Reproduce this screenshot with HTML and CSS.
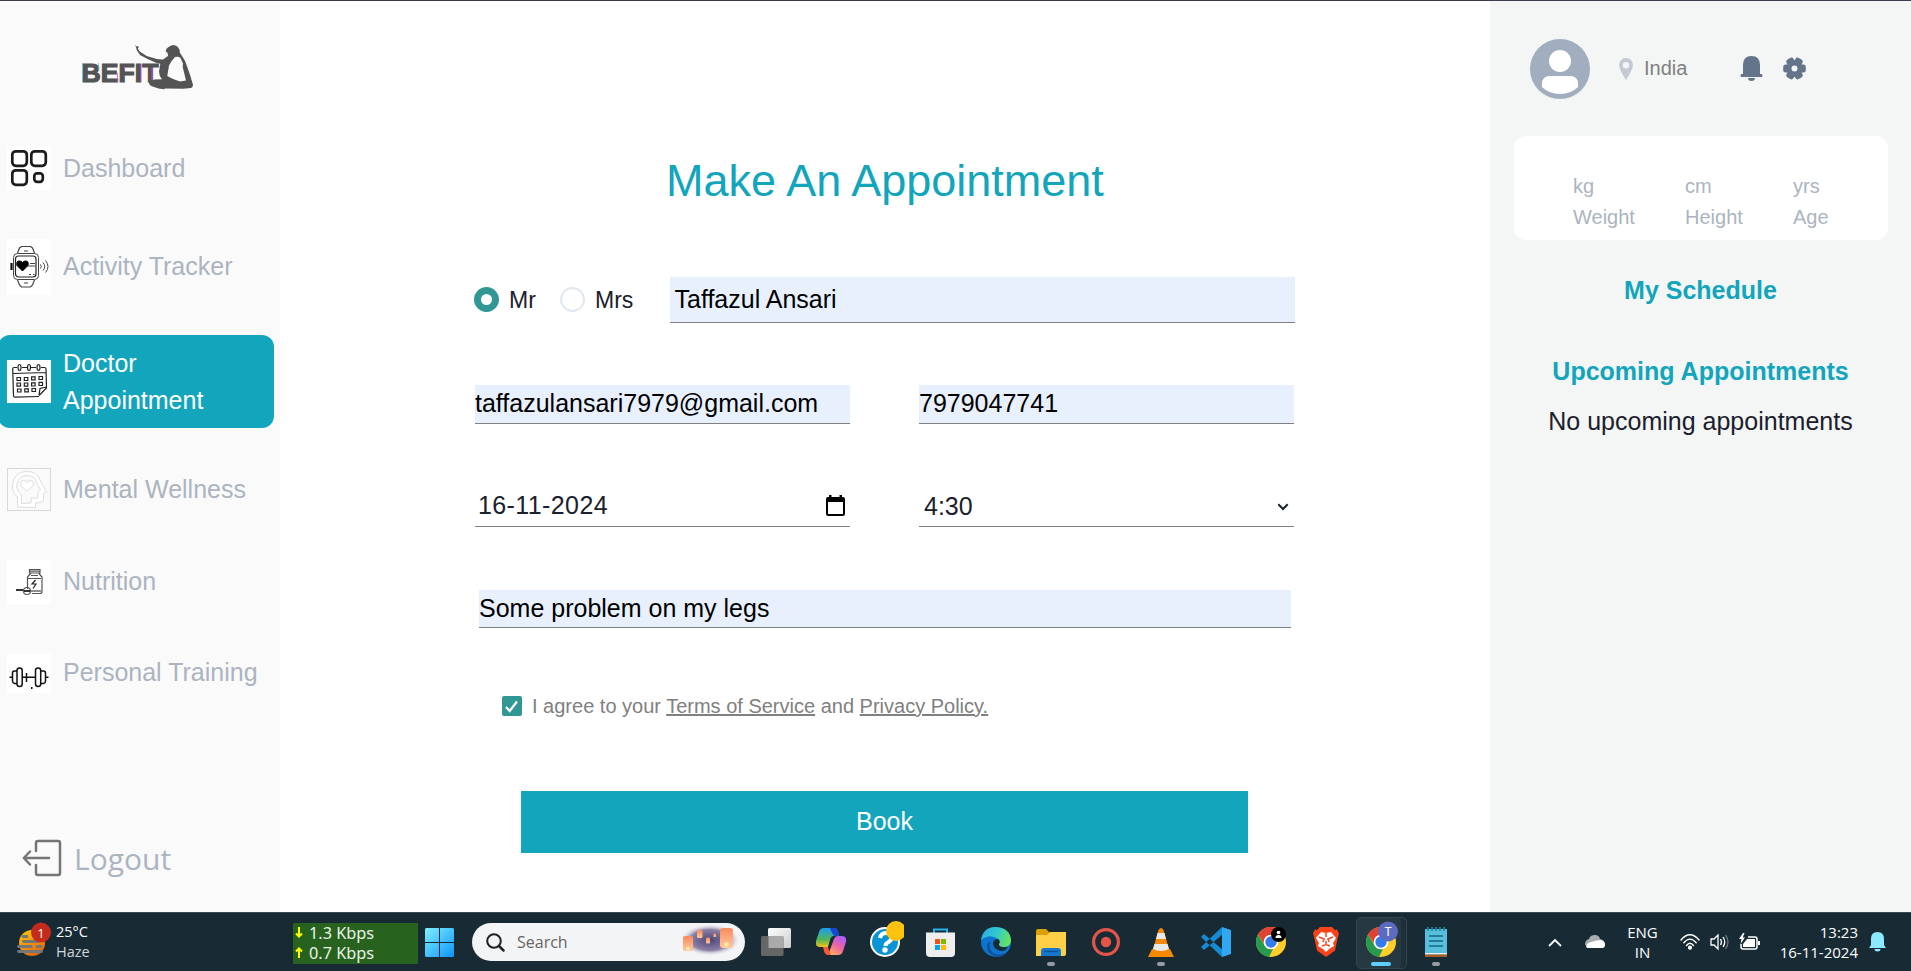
FILE: index.html
```html
<!DOCTYPE html>
<html lang="en">
<head>
<meta charset="utf-8">
<title>Befit - Doctor Appointment</title>
<link rel="stylesheet" href="styles.css">
</head>
<body>
<div class="app">
  <aside class="sidebar">
    <svg class="logo" width="114" height="50" viewBox="80 41 114 50">
      <g fill="#545454">
        <path d="M135 44l1.200 2.500L138 46l.7 1.500-1 1 2 3 7 4.500 10 3 6.300.6 2-1.600 3-2-.3-3-2-1.500q0-3 2.500-4.300 2.500-2 5-2.200 3.500.3 5 2.600 2 2.500 1.700 5.200l2 3 3.300 5.500 4.800 13.500 3 10q0 2.500-2 3.200l-8 .7-18-.3-1 .8q-6-.5-10-2.200-4.500-1-5.300-4.500l5.300-3 8-.3q-3-3.500-3-7.500l1.300-8-4.300-1-8.500-3.700-7.500-4-3.200-4.800zM175 57q-3.500 3.500-6 8.500l-1.700 10.500q3 2 6.500 3.200l6.200 2.300 6-1-3.300-13.500.3-3.500-2.500-5.500q-2-2-5.500-1z" fill-rule="evenodd"/>
        <text x="81.5" y="81.8" class="logo-text" textLength="77" lengthAdjust="spacingAndGlyphs">BEFIT</text>
      </g>
      <path d="M82.5 63v19M98.5 63v7" stroke="#48c9cf" stroke-width=".8"/>
      <path d="M117.500 73v9M124.500 67v3M141 64v18M152 68v12" stroke="#d44fe0" stroke-width=".8"/>
    </svg>
    <nav class="nav">
      <a class="item dashboard"><span class="pic pic-44"><svg width="44" height="44" viewBox="0 0 44 44" fill="none" stroke="#1c1c1c" stroke-width="2.700"><rect x="5.300" y="5.300" width="14.500" height="14.500" rx="3.500"/><rect x="24.300" y="5.300" width="14.500" height="14.500" rx="3.500"/><rect x="5.300" y="24.300" width="14.500" height="14.500" rx="3.500"/><rect x="27.300" y="27.300" width="8.500" height="8.500" rx="2.800"/></svg></span><span>Dashboard</span></a>
      <a class="item activity"><span class="pic pic-56"><svg width="44" height="56" viewBox="0 0 44 56" fill="none" stroke="#444"><path d="M10.500 14l2-5 2-1.500h9l2 1.500 2 5M10.500 41l2 5 2 2h9l2-2 2-5" stroke-width="1.200"/><rect x="6.500" y="14.500" width="25" height="26" rx="4"/><rect x="8.500" y="17" width="20.500" height="21" rx="3" stroke-width="1.200" stroke="#222"/><path d="M4.500 24v7" stroke="#111" stroke-width="2.200"/><path d="M15.500 32l-5.500-5.500q-1.200-4.500 2.500-4.500 2 0 3 1.500 1-1.500 3-1.500 3.700 0 2.500 4.500z" fill="#000" stroke="#000"/><path d="M20 27h8M23 24.500h5M17 12h4M17 44h4M22 35.500h2M26 35.500h1.500" stroke-width="1.200"/><path d="M33.500 25.500q1.500 2 0 4M36 23.500q3.500 4 0 8M38.500 21.500q5 6 0 12"/></svg></span><span>Activity Tracker</span></a>
      <a class="item active"><span class="pic pic-43"><svg width="44" height="43" viewBox="0 0 44 43" fill="none" stroke="#222" stroke-width="1.200"><path d="M32 36.500l-24 .7q-1.500 0-1.500-1.500L5.700 9q0-1.500 1.500-1.500h3M15 7.500h5M24 7.500h5M34 7.500h3.500q1.500 0 1.500 1.500l.5 19-7.500 7.500M6 13.500l33-1M32 35l1-6.500 6.500-1.500"/><g><ellipse cx="12.500" cy="7.500" rx="1.500" ry="3"/><ellipse cx="22" cy="7.500" rx="1.500" ry="3"/><ellipse cx="31.500" cy="7.500" rx="1.500" ry="3"/></g><path d="M10 17.500h3.500v3H10zM17.300 17.500h3.500v3h-3.500zM24.600 16.800h3.500v3h-3.500zM32 16.500h3.500v3H32zM10 23h3.500v3.200H10zM17.300 23h3.500v3.200h-3.500zM24.600 22.800h3.500V26h-3.500zM32 22.300h3.500v3.200H32zM10.500 29H14v3h-3.500zM17.800 28.800h3.500v3h-3.500zM25 28.500h3.500v3H25z"/></svg></span><span>Doctor Appointment</span></a>
      <a class="item mental"><span class="pic pic-frame"><svg width="44" height="43" viewBox="0 0 44 43" fill="#fff" stroke="#ddd"><rect x=".5" y=".5" width="43" height="42" fill="#fafafa" stroke="#d8d8d8"/><path d="M10.500 39V29Q4.500 24 5.500 16 8 3.500 19 3.500 31 3 33.500 13l6 11-3 1.500v6q0 3.500-8 3.500v4.500z"/><path d="M14.500 35.500V27Q9 22 10 16 12 7.500 19.500 7.500 29 7.500 29.500 15l4 6.500-2.500 2v6.500h-7v5z" fill="#fafafa"/><path d="M20 23.500l-6-6q-1.500-5 3-5 2 0 3 2 1-2 3-2 4.500 0 3 5z"/></svg></span><span>Mental Wellness</span></a>
      <a class="item nutrition"><span class="pic pic-44"><svg width="44" height="44" viewBox="0 0 44 44" fill="none" stroke="#555" stroke-width="1.200"><path d="M22.500 9.500h10.500v3.500H22.500zM22.500 11.200h10.500M24 13l-3.500 4v12M31.500 13l3.500 4V31.500q0 2-2 2h-8M21 18.500h13M24 15.500h7"/><path d="M28.500 20l-3.500 4h4l-3 4.500M24 31h10" stroke="#222"/><circle cx="20" cy="31" r="3.500"/><path d="M9 30h7M17 31h6" stroke="#333" stroke-width="1.800"/></svg></span><span>Nutrition</span></a>
      <a class="item training"><span class="pic pic-39"><svg width="44" height="39" viewBox="0 0 44 39" fill="none" stroke="#111" stroke-width="1.500"><rect x="10" y="14" width="5.200" height="18.500" rx="2.500"/><rect x="28.500" y="14" width="5.200" height="18.500" rx="2.500"/><path d="M10 17H7.500q-2 0-2 2v8q0 2 2 2.500H10M34 17h2.500q2 0 2 2v8q0 2-2 2.500H34M2.500 23.300h3M38.500 23.300h3M15.500 23.300h13M19.500 19v9"/><path d="M24 34h1.500" stroke-width="2"/></svg></span><span>Personal Training</span></a>
    </nav>
    <a class="logout"><svg width="40" height="38" viewBox="0 0 40 38" fill="none" stroke="#757575" stroke-width="2.500" stroke-linecap="round" stroke-linejoin="round"><path d="M14 12V4q0-2 2-2h20q2 0 2 2v30q0 2-2 2H16q-2 0-2-2v-8M27 19H2M8 12.500L1.800 19 8 25.500"/></svg><span>Logout</span></a>
  </aside>

  <main class="main">
    <h1 class="title">Make An Appointment</h1>
    <form class="form">
      <div class="row name-row">
        <span class="radio on"></span><span class="radio-label mr">Mr</span>
        <span class="radio"></span><span class="radio-label mrs">Mrs</span>
        <div class="field name filled">Taffazul Ansari</div>
      </div>
      <div class="row pair">
        <div class="field filled email">taffazulansari7979@gmail.com</div>
        <div class="field filled">7979047741</div>
      </div>
      <div class="row pair when">
        <div class="field date"><span>16-11-2024</span><svg width="19" height="21" viewBox="0 0 19 21"><path d="M3 0h2.500v2h8V0H16v2h1q2 0 2 2v15q0 2-2 2H2q-2 0-2-2V4q0-2 2-2h1zM2 7v12h15V7z" fill="#000" fill-rule="evenodd"/></svg></div>
        <div class="field time"><span>4:30</span><svg width="12" height="8" viewBox="0 0 12 8"><path d="M1.300 1.300L6 6l4.700-4.700" fill="none" stroke="#1a202c" stroke-width="2"/></svg></div>
      </div>
      <div class="field filled reason">Some problem on my legs</div>
      <div class="agree">
        <span class="check"><svg width="20" height="20" viewBox="0 0 20 20"><path d="M4 11l3.700 4L15 5.500" fill="none" stroke="#fff" stroke-width="2.200"/></svg></span>
        <span>I agree to your <u>Terms of Service</u> and <u>Privacy Policy.</u></span>
      </div>
      <div class="book">Book</div>
    </form>
  </main>

  <aside class="panel">
    <div class="profile">
      <svg width="60" height="60" viewBox="0 0 60 60"><circle cx="30" cy="30" r="30" fill="#a0aec0"/><circle cx="30" cy="22" r="11" fill="#fff"/><path d="M12 45q0-8 8-8h20q8 0 8 8v3q-7 7-18 7t-18-7z" fill="#fff"/></svg>
      <svg class="pin" width="14" height="22" viewBox="0 0 14 22"><path d="M7 0a7 7 0 0 1 7 7q0 4-7 15Q0 11 0 7a7 7 0 0 1 7-7zm0 4a3 3 0 1 0 0 6.400A3 3 0 0 0 7 4z" fill="#c3cad4"/></svg>
      <span class="place">India</span>
      <svg class="bell" width="23" height="25" viewBox="0 0 23 25"><path d="M3 18V9q0-9 8.500-9T20 9v9h1.500q1 0 1 1.500T21.500 21h-20q-1 0-1-1.500T1.500 18zM8 22h7q0 3-3.500 3T8 22z" fill="#64748b"/></svg>
      <svg class="gear" width="23" height="23" viewBox="-11.500 -11.500 23 23"><g fill="#64748b"><circle r="8"/><g id="tooth"><rect x="-11.300" y="-4" width="22.600" height="8" rx="2.500"/></g><use href="#tooth" transform="rotate(60)"/><use href="#tooth" transform="rotate(120)"/></g><circle r="3" fill="#f4f5f5"/></svg>
    </div>
    <div class="stats">
      <div class="weight">kg<br>Weight</div>
      <div class="height">cm<br>Height</div>
      <div class="age">yrs<br>Age</div>
    </div>
    <h2 class="schedule">My Schedule</h2>
    <h2 class="upcoming">Upcoming Appointments</h2>
    <p class="none">No upcoming appointments</p>
  </aside>
</div>

<footer class="taskbar">
  <div class="weather">
    <svg width="36" height="36" viewBox="16 918 36 36"><defs><linearGradient id="sun" x1="0" y1="0" x2=".5" y2="1"><stop offset="0" stop-color="#ffd000"/><stop offset="1" stop-color="#e86a10"/></linearGradient></defs><circle cx="32" cy="940" r="13" fill="url(#sun)"/><path d="M23 933.500h4M23.500 938.500h14M18.500 943.500h13M37 943.500h4M18.500 948.500h23" stroke="#747679" stroke-width="2.800" stroke-linecap="round"/><circle cx="41" cy="929.500" r="10" fill="#c42b1c"/><text x="41" y="934.500" class="badge-text" text-anchor="middle">1</text></svg>
    <div class="weather-text">25°C<br><span>Haze</span></div>
  </div>
  <div class="net"><div><svg width="8" height="12" viewBox="0 0 8 12"><path d="M4 0v9M1 6.500L4 9.500l3-3" fill="none" stroke="#ff0" stroke-width="2"/></svg>1.3 Kbps</div><div><svg width="8" height="12" viewBox="0 0 8 12"><path d="M4 11V2M1 4.500l3-3 3 3" fill="none" stroke="#ff0" stroke-width="2"/></svg>0.7 Kbps</div></div>
  <svg class="start" width="29" height="29" viewBox="0 0 29 29"><defs><linearGradient id="win" gradientUnits="userSpaceOnUse" x1="0" y1="0" x2="29" y2="29"><stop offset="0" stop-color="#7ef0ff"/><stop offset="1" stop-color="#0f94fb"/></linearGradient></defs><path d="M1 0h13v14H0V1zM15 0h13l1 1v13H15zM0 15h14v14H1l-1-1zM15 15h14v13l-1 1H15z" fill="url(#win)"/></svg>
  <div class="search">
    <svg width="19" height="19" viewBox="0 0 19 19" fill="none" stroke="#222"><circle cx="8" cy="8" r="6.800" stroke-width="2"/><path d="M13 13l4.500 4.500" stroke-width="2.500" stroke-linecap="round"/></svg>
    <span>Search</span>
    <svg class="lanterns" width="60" height="32" viewBox="0 0 60 32"><defs><radialGradient id="dusk"><stop offset="0" stop-color="#4f4677"/><stop offset=".65" stop-color="#8980a5"/><stop offset="1" stop-color="#f3f3f5" stop-opacity="0"/></radialGradient><linearGradient id="lamp" x1="0" y1="0" x2="0" y2="1"><stop offset="0" stop-color="#f78b5e"/><stop offset="1" stop-color="#ffc99b"/></linearGradient></defs><ellipse cx="30" cy="16" rx="30" ry="16" fill="url(#dusk)"/><g fill="url(#lamp)"><rect x="3" y="12" width="10" height="15" rx="2"/><rect x="17" y="6" width="5.500" height="8" rx="1.500"/><rect x="26" y="13.500" width="4" height="6" rx="1"/><rect x="33.500" y="9.500" width="2.500" height="3.500" rx=".8"/><rect x="40" y="4" width="13" height="20" rx="3"/></g><circle cx="8" cy="24.500" r="2" fill="#ffe9a8"/><circle cx="46.500" cy="20.500" r="2.300" fill="#ffe9a8"/></svg>
  </div>
  <div class="apps">
    <div class="app-icon"><svg width="30" height="30" viewBox="0 0 30 30"><defs><linearGradient id="tv" x1="0" y1="0" x2="1" y2="1"><stop offset="0" stop-color="#fff"/><stop offset="1" stop-color="#ccc"/></linearGradient></defs><rect x="7" y="1" width="23" height="20" rx="1.500" fill="url(#tv)"/><rect y="9" width="22.500" height="20" rx="1.500" fill="#666"/><path d="M7.500 9h15v12h-15z" fill="#aaa"/></svg></div>
    <div class="app-icon"><svg width="30" height="28" viewBox="0 0 30 28"><defs><linearGradient id="cpa" x1="0" y1="0" x2="0" y2="1"><stop offset="0" stop-color="#1b9cf0"/><stop offset=".6" stop-color="#50b65a"/><stop offset="1" stop-color="#f4c51c"/></linearGradient><linearGradient id="cpb" x1=".8" y1="0" x2=".2" y2="1"><stop offset="0" stop-color="#a95cff"/><stop offset=".5" stop-color="#ed62a5"/><stop offset="1" stop-color="#ffae5b"/></linearGradient></defs><path d="M8 0h10q3 0 4 4l1 4h-5q-3 0-4 4l-2 7H4q-5 0-4-6L3 4q1-4 5-4z" fill="url(#cpa)"/><path d="M14 0h4q3 0 4 4l1 4h-5l-3-5z" fill="#1944d8"/><path d="M22 27H12l3-8 3-8q1-3 4-3h4q5 0 4 6l-3 9q-1 4-5 4z" fill="url(#cpb)"/><path d="M7 19h5q1 5 3 8h-3q-3 0-4-4z" fill="#ff5733"/></svg></div>
    <div class="app-icon help"><svg width="38" height="44" viewBox="867 920 38 44"><circle cx="886" cy="942" r="14" fill="#0995d5" stroke="#fff" stroke-width="2"/><path d="M881 938q1-5 6-5 6 0 6 4 0 3-3.500 5-3 1.500-3 4" fill="none" stroke="#fff" stroke-width="4"/><circle cx="886" cy="950" r="2.700" fill="#fff"/><circle cx="897" cy="931" r="10" fill="#ffc20e"/></svg></div>
    <div class="app-icon"><svg width="29" height="29" viewBox="0 0 29 29"><path d="M8 6V1.500h13V6" fill="none" stroke="#24b2ed" stroke-width="2"/><path d="M0 4.500h29V25q0 4-4 4H4q-4 0-4-4z" fill="#eee"/><path d="M9 11h5v5H9z" fill="#f25022"/><path d="M15 11h5v5h-5z" fill="#7fba00"/><path d="M9 17h5v5H9z" fill="#00a4ef"/><path d="M15 17h5v5h-5z" fill="#ffb900"/></svg></div>
    <div class="app-icon"><svg width="30" height="30" viewBox="0 0 30 30"><defs><linearGradient id="edge" x1="0" y1=".2" x2="1" y2=".5"><stop offset="0" stop-color="#30a9e8"/><stop offset=".5" stop-color="#30c8cf"/><stop offset="1" stop-color="#68e45c"/></linearGradient></defs><circle cx="15" cy="15" r="15" fill="#0b74cf"/><path d="M0 13Q2 0 15 0q14 1 15 13 0 7-7 7-6 0-5-4 1-2-1-4Q9 6 0 13z" fill="url(#edge)"/><path d="M10 15q-4 5 2 11 6 4 14-1-3 5-10 5Q6 27 6 20q0-5 4-5z" fill="#174e98"/><path d="M12 16q1-4 5-4 3 2 1 5-1 4 9 3-4 6-10 3-5-2-5-7z" fill="#182b35"/></svg></div>
    <div class="app-icon"><svg width="30" height="27" viewBox="0 0 30 27"><path d="M0 2q0-2 2-2h8l4 4v5H0z" fill="#dca000"/><path d="M0 6h11l3-3h16v22q0 2-2 2H0z" fill="#ffcf48"/><path d="M5 27v-5q0-3 3-3h14q3 0 3 3v5z" fill="#1479ce"/><path d="M8 22.500h14" stroke="#0a4f94" stroke-width="1.300"/></svg><i></i></div>
    <div class="app-icon"><svg width="28" height="28" viewBox="0 0 28 28"><circle cx="14" cy="14" r="12.400" fill="none" stroke="#e35549" stroke-width="3.200"/><circle cx="14" cy="14" r="5.200" fill="#e35549"/></svg></div>
    <div class="app-icon"><svg width="26" height="29" viewBox="0 0 26 29"><path d="M4 21h18l4 8H0z" fill="#f38a00"/><path d="M10.500 2q2.500-4 5 0l6 21q-8 5-17 0z" fill="#f5870a"/><path d="M9.500 5h7l1.500 6H8zM6.500 16h13l1.500 5q-8 4-16 0z" fill="#e8e8e8"/></svg><i></i></div>
    <div class="app-icon"><svg width="30" height="30" viewBox="0 0 30 30"><path d="M0 10l3-3 19 16-1 7zM0 20l3 3L22 7l-1-7z" fill="#168bd2"/><path d="M21 0l9 3v24l-9 3z" fill="#32a8f3"/></svg></div>
    <div class="app-icon"><svg width="30" height="30" viewBox="0 0 30 30"><g id="chrome"><circle cx="15" cy="15" r="15" fill="#ffce2b"/><path d="M2 7.500A15 15 0 0 1 28 7.500H15L9 18z" fill="#df4134"/><path d="M2 7.500L9 19q3 4 8 3l-4 8A15 15 0 0 1 2 7.500z" fill="#269b4f"/><circle cx="15" cy="15" r="7.300" fill="#fff"/><circle cx="15" cy="15" r="5.700" fill="#347cea"/></g><circle cx="22.500" cy="7.500" r="7.500" fill="#000"/><circle cx="22.500" cy="5.500" r="1.800" fill="#fff"/><path d="M19.500 11q0-3 3-3t3 3z" fill="#fff"/></svg></div>
    <div class="app-icon"><svg width="26" height="30" viewBox="0 0 26 30"><path d="M7 0h12l3 3 2-.5 2 4-1 3-3 14-9 6.500L4 23.500 1 9.500l-1-3 2-4 2 .5z" fill="#fa431b"/><path d="M8 5l5 1 5-1 5 6-3 5 1 3-5 3-3 3-3-3-5-3 1-3-3-5z" fill="#fff"/><path d="M6 10l5 2-1 3M20 10l-5 2 1 3M13 14v4M9 19l4-1.500 4 1.500M13 6v4" fill="none" stroke="#fa431b" stroke-width="1.500"/></svg></div>
    <div class="app-icon current"><svg width="38" height="42" viewBox="-4 -6 38 42"><use href="#chrome"/><circle cx="22" cy="4.500" r="10" fill="#5c6bc0"/><text x="22" y="9" text-anchor="middle" class="avatar-text">T</text></svg><i></i></div>
    <div class="app-icon"><svg width="22" height="30" viewBox="0 0 22 30"><path d="M0 2h22v26H0z" fill="#57bfdc"/><path d="M0 26h22v1.500H0z" fill="#eee"/><path d="M0 27.500h22V30H0z" fill="#a75c22"/><path d="M4 9h14M4 14h14M4 19h14" stroke="#156782" stroke-width="1.700"/><path d="M3 0v4M7 0v4M11 0v4M15 0v4M19 0v4" stroke="#2383a2" stroke-width="1.700"/></svg><i></i></div>
  </div>
  <div class="tray">
    <svg width="14" height="9" viewBox="0 0 14 9"><path d="M1 8l6-6 6 6" fill="none" stroke="#fff" stroke-width="1.800"/></svg>
    <svg class="cloud" width="20" height="14" viewBox="0 0 20 14"><path d="M4 4q1-4 6-4 4 0 5 4 5 1 5 6H0q0-5 4-6z" fill="#a9adaf"/><path d="M1 11q1-3 5-4l8-2q6 0 6 5 0 3-3 3H3q-2 0-2-2z" fill="#fff"/></svg>
    <div class="lang">ENG<br>IN</div>
    <svg class="wifi" width="20" height="16" viewBox="0 0 20 16" fill="none" stroke="#fff" stroke-width="1.400" stroke-linecap="round"><path d="M1 6Q10-4.500 19 6M3.800 8.800Q10 1.500 16.200 8.800M6.500 11.500Q10 7 13.500 11.500"/><circle cx="10" cy="13.700" r="1.400" fill="#fff"/></svg>
    <svg class="speaker" width="20" height="18" viewBox="0 0 20 18" fill="none" stroke="#fff" stroke-width="1.300"><path d="M1 6h3l4-4v14l-4-4H1zM10.500 6q2 3 0 6M13 4q3.500 5 0 10"/><path d="M15.500 2q5 7 0 14" stroke="#68757c"/></svg>
    <svg class="battery" width="21" height="18" viewBox="0 0 21 18"><path d="M9 4h7q2 0 2 2v8q0 2-2 2H4q-2 0-2-2v-3" fill="none" stroke="#fff" stroke-width="1.500"/><path d="M8 6h8v8H4v-3zM4 0L0 6h2.500L1.500 11 6 4.500H3.800L5.500 0zM19 8h2v4h-2z" fill="#fff"/></svg>
    <div class="clock">13:23<br>16-11-2024</div>
    <svg class="notice" width="17" height="20" viewBox="0 0 17 20"><path d="M2 13V7q0-7 6.500-7T15 7v6l2 3H0zM5.500 17h6q0 2.500-3 2.500t-3-2.500z" fill="#8ceaff"/></svg>
  </div>
</footer>
</body>
</html>
```
FILE: styles.css
```css
* { box-sizing: border-box; }
body { margin: 0; width: 1911px; height: 971px; overflow: hidden; background: #fff; font: 25px "Liberation Sans", Arial, sans-serif; color: #1a202c; }
h1, h2, p { margin: 0; }
svg { display: block; flex: none; }
.app { display: flex; height: 912px; border-top: 1px solid #403a48; }

.sidebar { width: 280px; background: #fafafa; padding-top: 40px; color: #abb4c0; }
.logo { margin-left: 80px; }
.logo-text { font: bold 26.5px "Liberation Sans", Arial, sans-serif; stroke: #545454; stroke-width: 1.2px; }
.nav { margin-top: 49px; }
.item { display: flex; align-items: center; height: 56px; width: 274px; padding: 0 12px 0 7px; gap: 12px; line-height: 37.5px; white-space: nowrap; }
.item.dashboard span:last-child, .item.mental span:last-child { padding-top: 2px; }
.item.activity { margin-top: 43px; }
.item.active { height: 93px; margin: 40px 0 0 -2px; width: 276px; padding-left: 9px; padding-right: 60px; background: #12a5bc; color: #fff; border-radius: 12px; white-space: normal; }
.item.active span:last-child { line-height: 37px; }
.item.mental { margin-top: 33px; }
.item.nutrition { margin-top: 37px; }
.item.training { margin-top: 35px; }
.pic { width: 44px; flex: none; background: #fff; }
.pic-44 { height: 44px; }
.pic-56 { height: 56px; }
.pic-43, .pic-frame { height: 43px; }
.pic-39 { height: 39px; }
.logout { display: flex; align-items: center; gap: 12px; margin: 132px 0 0 22px; height: 50px; font: 30px/40px "Open Sans", "Noto Sans", sans-serif; }
.logout span { padding-top: 2px; }

.main { width: 1210px; padding-top: 146px; }
.title { height: 68px; text-align: center; font-size: 45px; font-weight: 400; line-height: 68px; color: #12a5bc; }
.form { padding: 62px 195px 0; }
.row { display: flex; }
.name-row { align-items: center; height: 46px; margin-left: -1px; }
.radio { width: 25px; height: 25px; flex: none; margin-top: -1px; border: 2px solid #e2e8f0; border-radius: 50%; }
.radio.on { border: 7px solid #319795; }
.radio-label { padding-left: 10px; padding-bottom: 1px; font-size: 23px; line-height: 42px; }
.radio-label.mr { width: 61px; }
.radio-label.mrs { width: 85px; }
.field { border-bottom: 1px solid #808080; white-space: nowrap; line-height: 37px; }
.filled { background: #e8f0fe; color: #000; }
.field.name { width: 625px; height: 46px; padding-left: 4.500px; line-height: 45px; }
.pair { gap: 69px; margin-top: 62px; }
.pair .field { width: 375px; height: 39px; }
.pair.when { margin-top: 63px; }
.when .field { display: flex; align-items: center; justify-content: space-between; height: 40px; padding: 0 5px 3px 3px; }
.date span { letter-spacing: .4px; }
.when .time { padding: 0 5px 0; }
.reason { height: 38px; margin: 63px 4px 0 4px; line-height: 36px; }
.agree { display: flex; align-items: center; gap: 10px; height: 20px; margin: 68px 0 0 27px; font-size: 20px; line-height: 20px; color: #808080; white-space: nowrap; }
.agree u { text-decoration-thickness: 1.5px; }
.check { width: 20px; height: 20px; border-radius: 2px; background: #319795; }
.book { height: 62px; margin: 75px 47px 0 46px; background: #12a5bc; color: #fff; text-align: center; line-height: 60px; }

.panel { width: 421px; background: #f4f5f5; padding-top: 38px; text-align: center; }
.profile { display: flex; align-items: center; height: 60px; padding-left: 40px; }
.pin { margin-left: 29px; }
.place { width: 106px; padding: 0 0 2px 11px; text-align: left; font-size: 20px; line-height: 30px; color: #808080; }
.gear { margin: 0 0 2px 20px; }
.bell { margin: 0 0 1px 1px; }
.stats { display: flex; width: 374px; height: 104px; margin: 37px 0 0 24px; padding: 35px 0 0 59px; border-radius: 12px; background: #fff; color: #abb4c0; font-size: 20px; line-height: 31px; text-align: left; }
.weight { width: 112px; }
.height { width: 108px; }
.schedule, .upcoming, .none { font-size: 25px; line-height: 38px; }
.schedule, .upcoming { color: #12a5bc; }
.schedule { margin-top: 31px; }
.upcoming { margin-top: 43px; }
.none { margin-top: 12px; }

.taskbar { display: flex; align-items: center; height: 59px; background: #182b35; border-top: 1px solid #3b4951; color: #fff; font: 15px/20px "Open Sans", "Noto Sans", sans-serif; }
.weather { display: flex; width: 293px; padding-left: 16px; gap: 4px; }
.weather svg { margin-top: -1px; }
.weather-text { white-space: nowrap; font-size: 14.5px; }
.weather-text span { color: #d0d5d8; }
.badge-text { font: 13px "Open Sans", sans-serif; fill: #fff; }
.net { width: 125px; height: 41px; margin-top: 2px; padding-left: 2px; background: #28621f; color: #e8f3e6; font: 16.3px/20.5px "Noto Sans", sans-serif; }
.net div { display: flex; align-items: center; gap: 6px; height: 20.5px; white-space: nowrap; }
.start { margin-left: 7px; }
.search { display: flex; align-items: center; width: 273px; height: 38px; margin-left: 18px; padding-left: 14px; border-radius: 19px; background: #f3f4f6; color: #666; font-size: 16px; }
.search span { margin-left: 12px; }
.lanterns { margin: -4px 0 0 112px; }
.apps { display: flex; margin-left: 3px; }
.app-icon { position: relative; display: flex; align-items: center; justify-content: center; width: 55px; height: 50px; }
.app-icon i { position: absolute; left: 24px; bottom: 1px; width: 8px; height: 4px; border-radius: 2px; background: #949ca1; }
.help svg { margin-right: 2px; }
.current svg { position: relative; z-index: 1; }
.current::before { content: ""; position: absolute; left: 3px; top: 0; width: 49px; height: 50px; border: 1px solid #34454e; border-radius: 5px; background: #263841; box-shadow: inset -5px 0 #1d3039; }
.app-icon.current i { left: 18px; width: 20px; background: #60cdff; z-index: 1; }
.avatar-text { font: 12px Roboto, sans-serif; fill: #fff; }
.tray { display: flex; align-items: center; margin-left: 85px; }
.cloud { margin-left: 23px; }
.lang { width: 75px; text-align: center; }
.speaker { margin-left: 10px; }
.battery { margin-left: 9px; }
.clock { width: 98px; text-align: right; white-space: nowrap; }
.notice { margin-left: 11px; }
```
